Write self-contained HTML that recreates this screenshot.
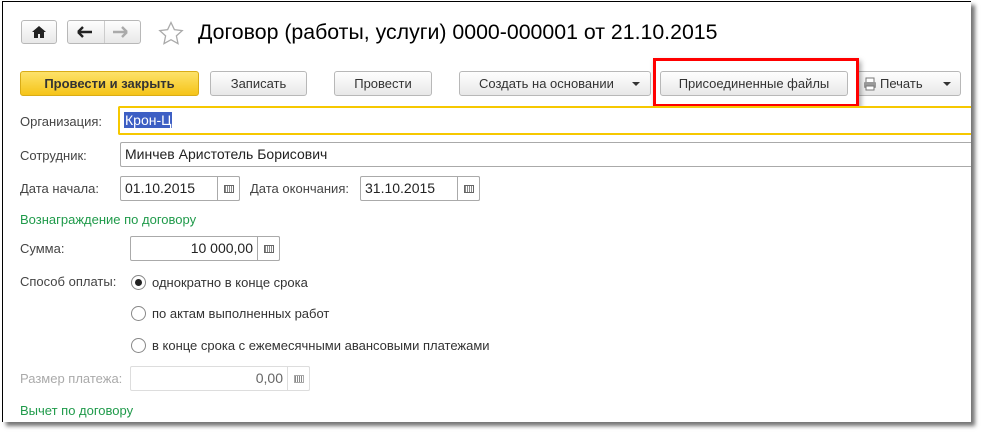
<!DOCTYPE html>
<html><head><meta charset="utf-8"><style>
*{margin:0;padding:0;box-sizing:border-box}
body{width:983px;height:434px;background:#fff;position:relative;overflow:hidden;font-family:"Liberation Sans",Arial,sans-serif;font-size:13px;color:#333}
.a{position:absolute}
#frame{left:2px;top:1px;width:969px;height:421px;border-left:1px solid #000;border-top:1px solid #000;box-shadow:4px 4px 4px rgba(0,0,0,.55);background:#fff}
.btn{position:absolute;height:25px;border:1px solid #b8b8b8;border-radius:3px;background:linear-gradient(#fefefe,#e8e8e8);text-align:center;line-height:23px;color:#333;font-size:13px}
.lbl{position:absolute;color:#444}
.fld{position:absolute;border:1px solid #aaa;border-radius:2px;height:25px;background:#fff;line-height:23px;padding-left:4px;color:#222}
.cal{position:absolute;top:-1px;width:23px;height:25px;border:1px solid #aaa;border-radius:0 2px 2px 0;background:#fff}
.cal i{position:absolute;left:6px;top:8px;width:10px;height:8px;border:1px solid #666;background:repeating-linear-gradient(90deg,#888 0 1px,#fff 1px 2px)}
.g{position:absolute;color:#1f9a4a}
.rad{position:absolute;width:15px;height:15px;border:1px solid #888;border-radius:50%;background:#fff}
.arr{position:absolute;width:0;height:0;border-left:4px solid transparent;border-right:4px solid transparent;border-top:4px solid #333}
</style></head><body>
<div id="frame" class="a"></div>

<div class="btn" style="left:21px;top:20px;width:36px;height:24px">
<svg width="14" height="12" style="margin-top:5px" viewBox="0 0 14 12"><path d="M7 0L0 6h2v6h4V8h2v4h4V6h2z" fill="#222"/></svg></div>
<div class="btn" style="left:67px;top:20px;width:74px;height:24px"></div>
<div class="a" style="left:104px;top:21px;width:1px;height:22px;background:#ccc"></div>
<svg class="a" style="left:77px;top:26px" width="16" height="12" viewBox="0 0 16 12"><path d="M1 6h14M1 6l5-5M1 6l5 5" stroke="#222" stroke-width="2.4" fill="none"/></svg>
<svg class="a" style="left:112px;top:26px" width="16" height="12" viewBox="0 0 16 12"><path d="M15 6H1M15 6l-5-5M15 6l-5 5" stroke="#aaa" stroke-width="2.4" fill="none"/></svg>
<svg class="a" style="left:158px;top:21px" width="26" height="25" viewBox="0 0 26 25"><path d="M13 1.5l3.4 7.2 7.8.9-5.8 5.3 1.6 7.7L13 18.7l-7 3.9 1.6-7.7-5.8-5.3 7.8-.9z" fill="none" stroke="#aaa" stroke-width="1.3"/></svg>
<div class="a" style="left:198px;top:20px;font-size:21.3px;color:#000;white-space:nowrap">Договор (работы, услуги) 0000-000001 от 21.10.2015</div>

<div class="btn" style="left:20px;top:71px;width:179px;background:linear-gradient(#fde26a,#f5c418);border-color:#d9ac16;font-weight:bold;color:#333">Провести и закрыть</div>
<div class="btn" style="left:210px;top:71px;width:97px">Записать</div>
<div class="btn" style="left:334px;top:71px;width:98px">Провести</div>
<div class="btn" style="left:459px;top:71px;width:192px;text-align:left;padding-left:19px">Создать на основании<span class="arr" style="left:172px;top:10px"></span></div>
<div class="btn" style="left:660px;top:71px;width:188px">Присоединенные файлы</div>
<div class="btn" style="left:857px;top:71px;width:104px;text-align:left;padding-left:22px">Печать<span class="arr" style="left:85px;top:10px"></span>
<svg class="a" style="left:5px;top:5px" width="14" height="14" viewBox="0 0 14 14"><rect x="3" y="1" width="8" height="5" fill="#fff" stroke="#777"/><rect x="1" y="5" width="12" height="6" rx="1" fill="#999"/><rect x="3" y="9" width="8" height="4" fill="#fff" stroke="#777"/></svg></div>
<div class="a" style="left:653px;top:58px;width:206px;height:49px;border:3px solid #f00;box-shadow:2px 3px 5px rgba(0,0,0,.35)"></div>

<div class="lbl" style="left:20px;top:114px">Организация:</div>
<div class="fld" style="left:118px;top:106px;width:853px;height:29px;border:2px solid #f6c800;border-right:none;border-radius:2px 0 0 2px;line-height:25px;font-size:14px"><span style="background:#3d5fc4;color:#fff;padding:0 1px">Крон-Ц</span></div>
<div class="lbl" style="left:20px;top:148px">Сотрудник:</div>
<div class="fld" style="left:120px;top:142px;width:851px;border-right:none;border-radius:2px 0 0 2px;font-size:14px">Минчев Аристотель Борисович</div>
<div class="lbl" style="left:20px;top:181px">Дата начала:</div>
<div class="fld" style="left:120px;top:176px;width:120px;font-size:14px">01.10.2015<div class="cal" style="left:96px"><i></i></div></div>
<div class="lbl" style="left:250px;top:181px">Дата окончания:</div>
<div class="fld" style="left:360px;top:176px;width:120px;font-size:14px">31.10.2015<div class="cal" style="left:96px"><i></i></div></div>

<div class="g" style="left:20px;top:212px">Вознаграждение по договору</div>
<div class="lbl" style="left:20px;top:241px">Сумма:</div>
<div class="fld" style="left:130px;top:236px;width:150px;font-size:14px;text-align:right;padding-right:26px">10 000,00<div class="cal" style="left:126px;border-left:1px solid #aaa"><i></i></div></div>
<div class="lbl" style="left:20px;top:274px">Способ оплаты:</div>
<div class="rad" style="left:131px;top:275px"><div style="position:absolute;left:3px;top:3px;width:7px;height:7px;border-radius:50%;background:#222"></div></div>
<div class="lbl" style="left:152px;top:275px;color:#333">однократно в конце срока</div>
<div class="rad" style="left:131px;top:306px"></div>
<div class="lbl" style="left:152px;top:306px;color:#333">по актам выполненных работ</div>
<div class="rad" style="left:131px;top:338px"></div>
<div class="lbl" style="left:152px;top:338px;color:#333">в конце срока с ежемесячными авансовыми платежами</div>
<div class="lbl" style="left:20px;top:371px;color:#aaa">Размер платежа:</div>
<div class="fld" style="left:130px;top:366px;width:180px;font-size:14px;text-align:right;padding-right:26px;border-color:#ddd;color:#666">0,00<div class="cal" style="left:156px;border-color:#ddd"><i style="border-color:#aaa"></i></div></div>
<div class="g" style="left:20px;top:403px">Вычет по договору</div>
</body></html>
